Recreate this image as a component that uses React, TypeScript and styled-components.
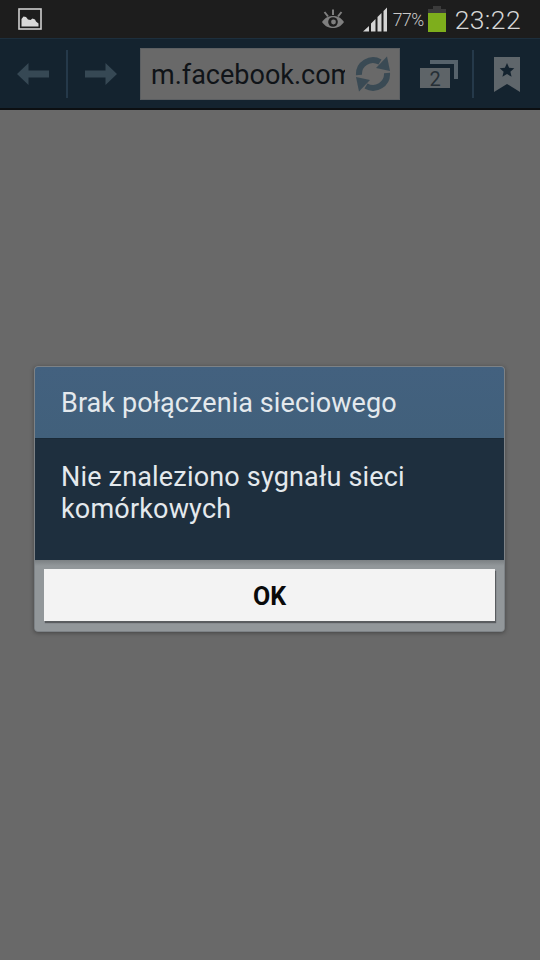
import React from "react";
import styled, { createGlobalStyle } from "styled-components";

const Global = createGlobalStyle`
  html, body {
    margin: 0;
    padding: 0;
    background: #696969;
  }
  * {
    box-sizing: border-box;
  }
`;

const Screen = styled.div`
  width: 540px;
  height: 960px;
  display: flex;
  flex-direction: column;
  overflow: hidden;
  background: #696969;
  font-family: Roboto, "Liberation Sans", sans-serif;
`;

const StatusBar = styled.div`
  height: 38px;
  flex: none;
  display: flex;
  align-items: center;
  padding: 0 19px 0 18px;
  background: #1d1d1d;
`;

const StatusSpacer = styled.div`
  flex: 1;
`;

const SignalGap = styled.div`
  width: 18px;
  flex: none;
`;

const Percent = styled.span`
  width: 35px;
  margin-left: 5px;
  padding-top: 2px;
  font-size: 17.5px;
  font-weight: 300;
  letter-spacing: -0.4px;
  color: #c9c9c9;
`;

const Clock = styled.span`
  margin-left: 9px;
  font-size: 26.5px;
  font-weight: 300;
  letter-spacing: 0.4px;
  color: #d6d6d6;
`;

const Toolbar = styled.div`
  height: 72px;
  flex: none;
  display: flex;
  align-items: center;
  padding-top: 1px;
  background: #14232f;
  border-top: 1px solid #1d2f3d;
  border-bottom: 2px solid #0c0f12;
`;

const ToolSlot = styled.div<{ $width: number; $shift?: number }>`
  width: ${(p) => p.$width}px;
  flex: none;
  padding-left: ${(p) => p.$shift ?? 0}px;
  display: flex;
  align-items: center;
  justify-content: center;
`;

const Divider = styled.div`
  width: 2px;
  height: 48px;
  flex: none;
  background: #25394a;
`;

const UrlField = styled.div`
  width: 260px;
  height: 52px;
  flex: none;
  margin-left: 6px;
  padding-left: 10px;
  display: flex;
  align-items: center;
  background: #696969;
  border: 1px solid #5c5f62;
`;

const UrlText = styled.div`
  width: 194px;
  padding-top: 2px;
  overflow: hidden;
  white-space: nowrap;
  font-size: 27px;
  color: #101418;
`;

const RefreshSlot = styled.div`
  margin-left: 10px;
  display: flex;
`;

const Content = styled.div`
  flex: 1;
  display: flex;
  justify-content: center;
  padding: 256px 1px 0 0;
`;

const Dialog = styled.div`
  width: 471px;
  height: 266px;
  display: flex;
  flex-direction: column;
  border-radius: 4px;
  overflow: hidden;
  background: #8f9497;
  border: 1px solid #7d8286;
  box-shadow: 0 1px 4px rgba(0, 0, 0, 0.35);
`;

const DialogTitle = styled.div`
  height: 72px;
  flex: none;
  display: flex;
  align-items: center;
  padding: 0 26px;
  font-size: 27px;
  letter-spacing: 0.08px;
  color: #e4e9ed;
  background: linear-gradient(#43617f, #41607b);
  border-bottom: 1px solid #1a2a37;
`;

const DialogBody = styled.div`
  height: 121px;
  flex: none;
  padding: 22px 26px 0;
  font-size: 27px;
  line-height: 32px;
  letter-spacing: 0.18px;
  color: #e4e9ed;
  background: #1e2f3e;
`;

const DialogFooter = styled.div`
  flex: 1;
  padding: 9px 9px 0;
  background: linear-gradient(#7b8083 0, #92979a 6px);
`;

const OkButton = styled.button`
  display: block;
  width: 451px;
  height: 52px;
  padding: 2px 0 0;
  border: 0;
  font-family: inherit;
  font-size: 25px;
  font-weight: 700;
  color: #0a0a0a;
  background: #f3f3f3;
  box-shadow: 1px 2px 1px #5a5d60;
`;

const ImageIcon = () => (
  <svg width="24" height="22" viewBox="0 0 24 22">
    <rect x="1" y="1" width="22" height="20" fill="#1d1d1d" stroke="#cfcfcf" strokeWidth="1.6" />
    <path d="M3.500 18.500V11l2-2.500 2.500.5 2 2.500 2.500.5 2-1.500 2.500 1 1 2 2.500 2v3z" fill="#d8d8d8" />
  </svg>
);

const EyeIcon = () => (
  <svg width="24" height="20" viewBox="0 0 24 20">
    <path d="M1 13c3-4.500 7-6 11-6s8 1.500 11 6c-3 4.500-7 6-11 6s-8-1.500-11-6z" fill="#7f7f7f" />
    <circle cx="12" cy="13" r="4.800" fill="#1d1d1d" />
    <circle cx="12.500" cy="13" r="2.400" fill="#7f7f7f" />
    <path d="M3.500 3l3.500 4.500M12 0.500V6M20.500 3L17 7.500" stroke="#7f7f7f" strokeWidth="2" fill="none" />
  </svg>
);

const SignalIcon = () => (
  <svg width="25" height="25" viewBox="0 0 25 25">
    <path d="M0 24.500l6-5.500v5.500zM8 24.500v-8l4.500-4.500v12.500zM14.500 24.500V10l4-4v18.500zM20.500 24.500V4l3.500-3.500v24z" fill="#d4d4d4" />
  </svg>
);

const BatteryIcon = () => (
  <svg width="18" height="26" viewBox="0 0 18 26">
    <rect x="5" y="0" width="8" height="3" fill="#3b3b3b" />
    <rect x="0" y="3" width="18" height="4" fill="#3b3b3b" />
    <rect x="0" y="7" width="18" height="19" fill="#7eae1c" />
  </svg>
);

const ArrowIcon = ({ flip }: { flip?: boolean }) => (
  <svg width="32" height="22" viewBox="0 0 32 22" style={flip ? { transform: "scaleX(-1)" } : undefined}>
    <path d="M0 11L11.500 0v7.500H32v7H11.500V22z" fill="#364854" />
  </svg>
);

const RefreshIcon = () => (
  <svg width="36" height="36" viewBox="0 0 36 36">
    <g fill="none" stroke="#3a4a54" strokeWidth="6">
      <path d="M4 19A14 14 0 0 1 25 6" />
      <path d="M32 17A14 14 0 0 1 11 30" />
    </g>
    <path d="M32 0.500l3 14.500-14-3z" fill="#3a4a54" />
    <path d="M4 35.500l-3-14.500 14 3z" fill="#3a4a54" />
  </svg>
);

const TabsIcon = () => (
  <svg width="38" height="28" viewBox="0 0 38 28" overflow="visible">
    <path d="M10 0h28v19h-4V4H10z" fill="#56626b" />
    <rect x="0" y="8" width="30" height="20" fill="#5e6468" />
    <text x="15" y="26" textAnchor="middle" fontFamily="Roboto, sans-serif" fontSize="20" fill="#262f36">
      2
    </text>
  </svg>
);

const BookmarkIcon = () => (
  <svg width="26" height="35" viewBox="0 0 26 35">
    <path d="M0 0h26v35l-13-8-13 8z" fill="#5f666b" />
    <path d="M13 6l2.100 4.800 5.200.5-3.900 3.400 1.200 5.100-4.600-2.700-4.600 2.700 1.200-5.100-3.900-3.400 5.200-.5z" fill="#14232f" />
  </svg>
);

const App: React.FC = () => {
  return (
    <Screen>
      <Global />
      <StatusBar>
        <ImageIcon />
        <StatusSpacer />
        <EyeIcon />
        <SignalGap />
        <SignalIcon />
        <Percent>77%</Percent>
        <BatteryIcon />
        <Clock>23:22</Clock>
      </StatusBar>
      <Toolbar>
        <ToolSlot $width={66}>
          <ArrowIcon />
        </ToolSlot>
        <Divider />
        <ToolSlot $width={66}>
          <ArrowIcon flip />
        </ToolSlot>
        <UrlField>
          <UrlText>m.facebook.com</UrlText>
          <RefreshSlot>
            <RefreshIcon />
          </RefreshSlot>
        </UrlField>
        <ToolSlot $width={72} $shift={5}>
          <TabsIcon />
        </ToolSlot>
        <Divider />
        <ToolSlot $width={65}>
          <BookmarkIcon />
        </ToolSlot>
      </Toolbar>
      <Content>
        <Dialog>
          <DialogTitle>Brak połączenia sieciowego</DialogTitle>
          <DialogBody>
            Nie znaleziono sygnału sieci
            <br />
            komórkowych
          </DialogBody>
          <DialogFooter>
            <OkButton>OK</OkButton>
          </DialogFooter>
        </Dialog>
      </Content>
    </Screen>
  );
};

export default App;
